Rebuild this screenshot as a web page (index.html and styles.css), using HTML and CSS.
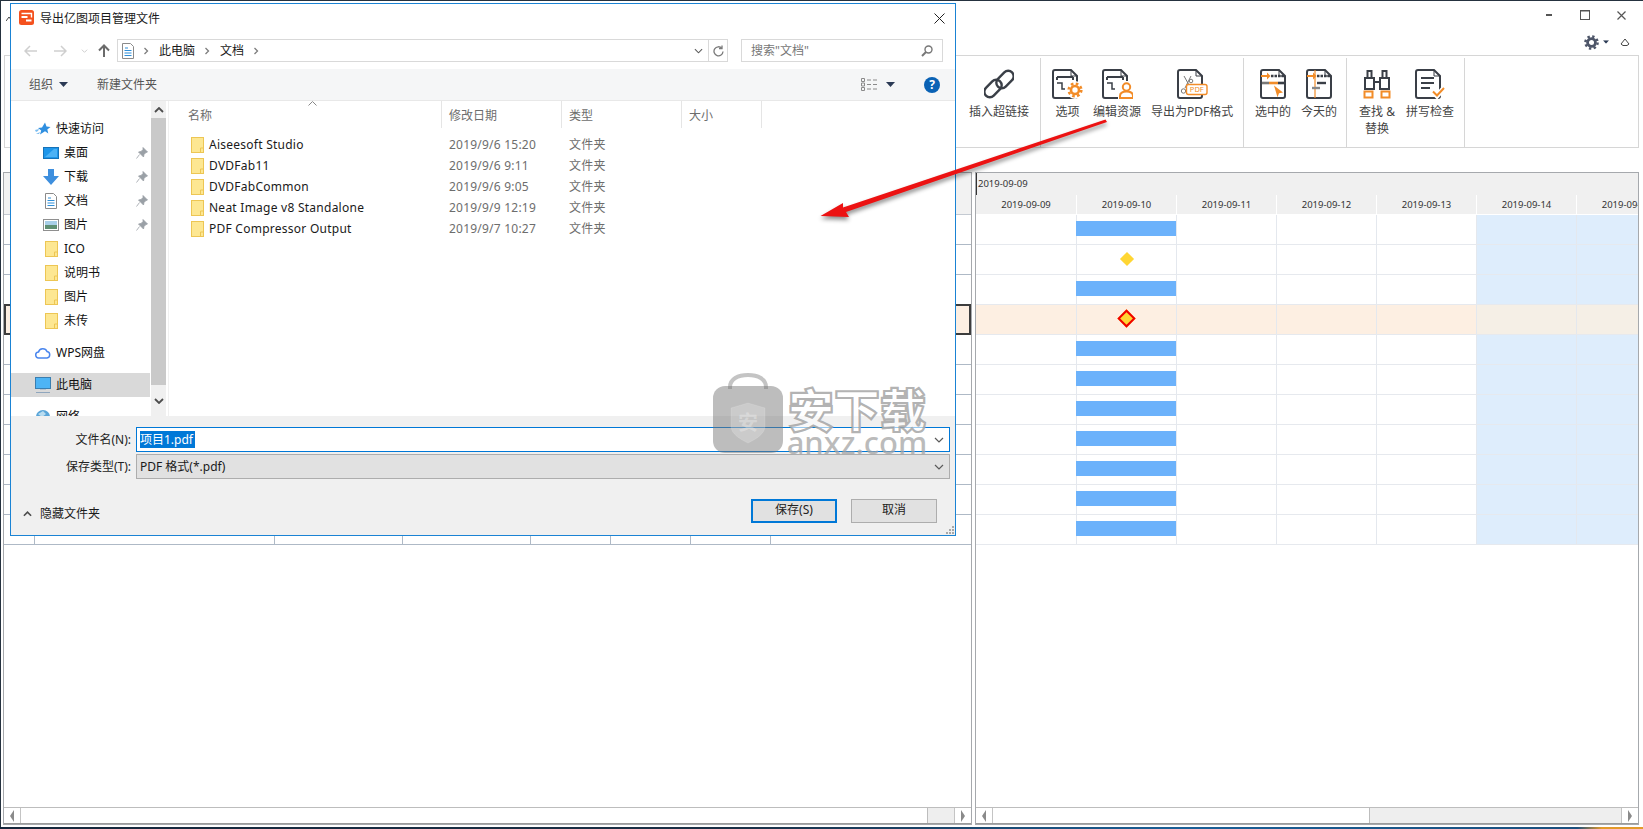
FILE: index.html
```html
<!DOCTYPE html>
<html lang="zh-CN">
<head>
<meta charset="utf-8">
<title>导出亿图项目管理文件</title>
<link rel="stylesheet" href="styles.css">
</head>
<body>
<svg class="sprite" aria-hidden="true">
  <symbol id="folder" viewBox="0 0 13 16"><rect x=".5" y=".5" width="12" height="15" fill="#fde792" stroke="#edc654"/><path d="M9.500 15v-4h3" fill="none" stroke="#edc654"/></symbol>
  <symbol id="pin" viewBox="0 0 12 12"><path d="M7 .5l4.500 4.500-1.500.5-2 2-.5 2.500-5-5 2.500-.5 2-2z M3.500 7.500L.5 11.500" fill="#9aa0a6" stroke="#9aa0a6" stroke-width=".8"/></symbol>
  <symbol id="chev" viewBox="0 0 8 8"><path d="M2.500 1l3 3-3 3" fill="none" stroke="#7d7d7d" stroke-width="1.300"/></symbol>
  <symbol id="down" viewBox="0 0 10 6"><path d="M1 1l4 4 4-4" fill="none" stroke="#5a5a5a" stroke-width="1.200"/></symbol>
  <symbol id="tri" viewBox="0 0 9 5"><path d="M0 0h9L4.500 5z" fill="#2b3a55"/></symbol>
  <symbol id="rdoc" viewBox="0 0 26 30"><path d="M3 1h16l6 6v20a2 2 0 0 1-2 2H3a2 2 0 0 1-2-2V3a2 2 0 0 1 2-2z" fill="#fff" stroke="#3a3f47" stroke-width="2"/><path d="M19 1v6h6" fill="none" stroke="#3a3f47"/></symbol>
  <symbol id="smalldoc" viewBox="0 0 12 16"><path d="M.5.5h8l3 3v12h-11z" fill="#fff" stroke="#8a8a8a"/><path d="M3 5h3M2.500 7.500h7M2.500 10h7M2.500 12.500h7" stroke="#2f8fd8"/></symbol>
</svg>

<div class="app">
  <div class="frame">
    <header class="winbar">
      <div class="winrow">
        <svg class="appmark" width="6" height="5" viewBox="0 0 6 5"><path d="M0 5l3-4 3 4" fill="none" stroke="#444"/></svg>
        <div class="ctrls">
          <span class="ctrl"><svg width="6" height="2" viewBox="0 0 6 2"><rect width="6" height="2" fill="#555"/></svg></span>
          <span class="ctrl"><svg width="10" height="10" viewBox="0 0 10 10"><rect x=".5" y=".5" width="9" height="9" fill="none" stroke="#555"/><path d="M0 1h10" stroke="#555"/></svg></span>
          <span class="ctrl"><svg width="9" height="9" viewBox="0 0 9 9"><path d="M.5.5l8 8M8.500.5l-8 8" stroke="#555" stroke-width="1.200"/></svg></span>
        </div>
      </div>
      <div class="toolrow">
        <svg width="15" height="15" viewBox="0 0 16 16"><circle cx="8" cy="8" r="4.200" fill="none" stroke="#4d5568" stroke-width="3"/><circle cx="8" cy="8" r="6.500" fill="none" stroke="#4d5568" stroke-width="2.600" stroke-dasharray="2.500 2.600"/></svg>
        <svg class="gear-tri" width="6" height="4" viewBox="0 0 9 5"><use href="#tri"/></svg>
        <svg class="collapse" width="10" height="8" viewBox="0 0 10 8"><path d="M1 6l4-5 4 5-2 1.500H3z" fill="none" stroke="#444"/></svg>
      </div>
    </header>

    <section class="ribbon">
      <div class="group g-first">
        <div class="item">
          <svg width="30" height="30" viewBox="0 0 30 30" fill="none" stroke="#3a3f47" stroke-width="2.400"><rect x="-1" y="14" width="20" height="11" rx="5.500" transform="rotate(-45 9 19.500)"/><rect x="11" y="5" width="20" height="11" rx="5.500" transform="rotate(-45 21 10.500)"/></svg>
          <span class="lbl">插入超链接</span>
        </div>
      </div>
      <div class="group g-2">
        <div class="item">
          <svg width="31" height="30" viewBox="0 0 31 30"><use href="#rdoc" width="26" height="30"/><path d="M5 8h16M5 8v3M21 8v3" fill="none" stroke="#3a3f47" stroke-width="2"/><path d="M5 14h5v6h3" fill="none" stroke="#3a3f47" stroke-width="1.500"/><circle cx="23" cy="21" r="9" fill="#fff"/><circle cx="23" cy="21" r="4" fill="none" stroke="#f28c28" stroke-width="2.600"/><circle cx="23" cy="21" r="6.300" fill="none" stroke="#f28c28" stroke-width="2.600" stroke-dasharray="2.600 2.350"/></svg>
          <span class="lbl">选项</span>
        </div>
        <div class="item">
          <svg width="31" height="30" viewBox="0 0 31 30"><use href="#rdoc" width="26" height="30"/><path d="M5 8h16M5 8v3M21 8v3" fill="none" stroke="#3a3f47" stroke-width="2"/><path d="M5 14h5v6h3" fill="none" stroke="#3a3f47" stroke-width="1.500"/><rect x="16" y="12" width="15" height="18" fill="#fff"/><circle cx="24.500" cy="18" r="3.700" fill="none" stroke="#f28c28" stroke-width="2"/><path d="M18 29v-2c0-3 3-4.500 6.500-4.500S31 24 31 27v2z" fill="none" stroke="#f28c28" stroke-width="2"/></svg>
          <span class="lbl">编辑资源</span>
        </div>
        <div class="item item-pdf">
          <svg width="31" height="30" viewBox="0 0 31 30"><use href="#rdoc" width="26" height="30"/><path d="M7 7l5 9M14 7l-6 12" fill="none" stroke="#777" stroke-width="1"/><circle cx="6.500" cy="22" r="2.200" fill="none" stroke="#777"/><circle cx="14" cy="12" r="1.800" fill="none" stroke="#777"/><rect x="9.500" y="15.500" width="20.500" height="10" rx="2" fill="#fff" stroke="#f28c28" stroke-width="1.400"/><text x="19.800" y="23.300" class="pdf-t">PDF</text></svg>
          <span class="lbl">导出为PDF格式</span>
        </div>
      </div>
      <div class="group g-3">
        <div class="item">
          <svg width="26" height="30" viewBox="0 0 26 30"><use href="#rdoc" width="26" height="30"/><path d="M1 7h7" stroke="#f28c28" stroke-width="2"/><path d="M7 3.500L10.500 7 7 10.500z" fill="#f28c28"/><path d="M11 7h13" stroke="#3a3f47" stroke-width="2.600" stroke-dasharray="2.500 1"/><path d="M2 14h7" stroke="#777" stroke-width="2.600"/><path d="M9 14h9" stroke="#f28c28" stroke-width="2.600"/><path d="M18 14h6" stroke="#3a3f47" stroke-width="2.600"/><path d="M14 16.500l9 7-4 .8-1.500 4z" fill="#f28c28"/></svg>
          <span class="lbl">选中的</span>
        </div>
        <div class="item">
          <svg width="26" height="30" viewBox="0 0 26 30"><use href="#rdoc" width="26" height="30"/><path d="M9 1v28" stroke="#f28c28" stroke-width="1.200"/><path d="M1 7h7" stroke="#f28c28" stroke-width="2"/><path d="M7 3.500L10.500 7 7 10.500z" fill="#f28c28"/><path d="M11 7h13" stroke="#3a3f47" stroke-width="2.400" stroke-dasharray="2.500 1"/><path d="M11 14h9" stroke="#3a3f47" stroke-width="2.400"/><path d="M6 19h8" stroke="#888" stroke-width="2.400"/></svg>
          <span class="lbl">今天的</span>
        </div>
      </div>
      <div class="group g-4">
        <div class="item item-find">
          <svg width="28" height="30" viewBox="0 0 28 30" fill="none"><path d="M2 9h9v11H2zM17 9h9v11h-9zM4.500 9V2h4v7M19.500 9V2h4v7M11 13h6" stroke="#3a3f47" stroke-width="2"/><path d="M1.500 22.500h8v6h-8zM18.500 22.500h8v6h-8z" stroke="#f28c28" stroke-width="2"/></svg>
          <span class="lbl">查找 &amp;<br>替换</span>
        </div>
        <div class="item">
          <svg width="30" height="30" viewBox="0 0 30 30"><use href="#rdoc" width="26" height="30"/><path d="M6 9h13M6 14h13M6 19h9" stroke="#3a3f47" stroke-width="1.800"/><path d="M17 22l5 5 7-8" fill="none" stroke="#fff" stroke-width="5"/><path d="M18 22.500l4 4 7-7.500" fill="none" stroke="#f28c28" stroke-width="2"/></svg>
          <span class="lbl">拼写检查</span>
        </div>
      </div>
      <div class="group g-last"></div>
    </section>

    <main class="panes">
      <section class="pane pane-l">
        <div class="pane-body">
          <div class="tbl-head"></div>
          <div class="lrow"><i></i><i></i><i></i><i></i><i></i><i></i><i></i><i></i></div>
          <div class="lrow"><i></i><i></i><i></i><i></i><i></i><i></i><i></i><i></i></div>
          <div class="lrow"><i></i><i></i><i></i><i></i><i></i><i></i><i></i><i></i></div>
          <div class="lrow lrow-sel"></div>
          <div class="lrow"><i></i><i></i><i></i><i></i><i></i><i></i><i></i><i></i></div>
          <div class="lrow"><i></i><i></i><i></i><i></i><i></i><i></i><i></i><i></i></div>
          <div class="lrow"><i></i><i></i><i></i><i></i><i></i><i></i><i></i><i></i></div>
          <div class="lrow"><i></i><i></i><i></i><i></i><i></i><i></i><i></i><i></i></div>
          <div class="lrow"><i></i><i></i><i></i><i></i><i></i><i></i><i></i><i></i></div>
          <div class="lrow"><i></i><i></i><i></i><i></i><i></i><i></i><i></i><i></i></div>
          <div class="lrow"><i></i><i></i><i></i><i></i><i></i><i></i><i></i><i></i></div>
        </div>
        <div class="sb">
          <span class="sb-btn"><b class="arr-l"></b></span>
          <span class="thumb thumb-l"></span>
          <span class="track"></span>
          <span class="sb-btn sb-end"><b class="arr-r"></b></span>
        </div>
      </section>

      <section class="pane pane-r">
        <div class="pane-body">
          <div class="g-head1"><span>2019-09-09</span></div>
          <div class="g-head2">
            <span>2019-09-09</span><span>2019-09-10</span><span>2019-09-11</span><span>2019-09-12</span><span>2019-09-13</span><span>2019-09-14</span><span>2019-09-15</span>
          </div>
          <div class="grow"><i></i><i><u class="bar"></u></i><i></i><i></i><i></i><i class="we"></i><i class="we"></i></div>
          <div class="grow"><i></i><i class="mid"><u class="dia"></u></i><i></i><i></i><i></i><i class="we"></i><i class="we"></i></div>
          <div class="grow"><i></i><i><u class="bar"></u></i><i></i><i></i><i></i><i class="we"></i><i class="we"></i></div>
          <div class="grow grow-hl"><i></i><i class="mid"><u class="dia dia-sel"></u></i><i></i><i></i><i></i><i class="we"></i><i class="we"></i></div>
          <div class="grow"><i></i><i><u class="bar"></u></i><i></i><i></i><i></i><i class="we"></i><i class="we"></i></div>
          <div class="grow"><i></i><i><u class="bar"></u></i><i></i><i></i><i></i><i class="we"></i><i class="we"></i></div>
          <div class="grow"><i></i><i><u class="bar"></u></i><i></i><i></i><i></i><i class="we"></i><i class="we"></i></div>
          <div class="grow"><i></i><i><u class="bar"></u></i><i></i><i></i><i></i><i class="we"></i><i class="we"></i></div>
          <div class="grow"><i></i><i><u class="bar"></u></i><i></i><i></i><i></i><i class="we"></i><i class="we"></i></div>
          <div class="grow"><i></i><i><u class="bar"></u></i><i></i><i></i><i></i><i class="we"></i><i class="we"></i></div>
          <div class="grow"><i></i><i><u class="bar"></u></i><i></i><i></i><i></i><i class="we"></i><i class="we"></i></div>
        </div>
        <div class="sb">
          <span class="sb-btn"><b class="arr-l"></b></span>
          <span class="thumb thumb-r"></span>
          <span class="track"></span>
          <span class="sb-btn sb-end"><b class="arr-r"></b></span>
        </div>
      </section>
    </main>
  </div>
  <div class="taskbar"></div>
</div>

<div class="dialog">
  <div class="d-title">
    <svg width="15" height="15" viewBox="0 0 15 15"><rect width="15" height="15" rx="2.500" fill="#f4511e"/><path d="M2.500 3.500h10v4" fill="none" stroke="#fff" stroke-width="1.400"/><rect x="2.500" y="6" width="6" height="2" fill="#fff"/><rect x="7" y="9.500" width="5.500" height="2" fill="#fff"/></svg>
    <span class="d-title-t">导出亿图项目管理文件</span>
    <svg class="d-close" width="11" height="11" viewBox="0 0 11 11"><path d="M.5.500l10 10M10.500.5l-10 10" stroke="#222" stroke-width="1"/></svg>
  </div>

  <div class="d-nav">
    <span class="nb nb-back"><svg width="13" height="12" viewBox="0 0 13 12" fill="none" stroke="#cfcfcf" stroke-width="1.500"><path d="M6 1L1 6l5 5M1 6h12"/></svg></span>
    <span class="nb nb-fwd"><svg width="13" height="12" viewBox="0 0 13 12" fill="none" stroke="#cfcfcf" stroke-width="1.500"><path d="M7 1l5 5-5 5M12 6H0"/></svg></span>
    <span class="nb nb-dd"><svg width="7" height="4" viewBox="0 0 10 6"><path d="M1 1l4 4 4-4" fill="none" stroke="#cfcfcf" stroke-width="1.500"/></svg></span>
    <span class="nb nb-up"><svg width="12" height="13" viewBox="0 0 12 13" fill="none" stroke="#6b6b6b" stroke-width="2"><path d="M1 6.500l5-5 5 5M6 2v11"/></svg></span>
    <div class="addr">
      <svg width="12" height="16" viewBox="0 0 12 16"><use href="#smalldoc"/></svg>
      <svg class="cr-chev" width="8" height="8" viewBox="0 0 8 8"><use href="#chev"/></svg>
      <span class="crumb">此电脑</span>
      <svg class="cr-chev" width="8" height="8" viewBox="0 0 8 8"><use href="#chev"/></svg>
      <span class="crumb">文档</span>
      <svg class="cr-chev" width="8" height="8" viewBox="0 0 8 8"><use href="#chev"/></svg>
      <span class="addr-fill"></span>
      <svg class="addr-dd" width="9" height="6" viewBox="0 0 10 6"><use href="#down"/></svg>
      <span class="addr-ref"><svg width="11" height="12" viewBox="0 0 11 12" fill="none" stroke="#7a7a7a" stroke-width="1.300"><path d="M8.800 3.200A4.500 4.500 0 1 0 10 6.500"/><path d="M9 .5v3H6" /></svg></span>
    </div>
    <div class="search">
      <span>搜索"文档"</span>
      <svg width="12" height="12" viewBox="0 0 12 12" fill="none" stroke="#777" stroke-width="1.400"><circle cx="7.500" cy="4.500" r="3.500"/><path d="M5 7l-4 4" stroke-width="2"/></svg>
    </div>
  </div>

  <div class="d-tools">
    <span class="tl">组织</span>
    <svg class="tl-tri" width="9" height="5" viewBox="0 0 9 5"><use href="#tri"/></svg>
    <span class="tl tl-new">新建文件夹</span>
    <span class="tl-fill"></span>
    <svg width="16" height="13" viewBox="0 0 16 13" fill="none" stroke="#8a8a8a"><path d="M.5.500h3v3h-3zM.5 5h3v3h-3zM.5 9.500h3v3h-3zM6 2h4M6 6.500h4M6 11h4M12 2h4M12 6.500h4M12 11h4"/></svg>
    <svg class="tl-tri2" width="9" height="5" viewBox="0 0 9 5"><use href="#tri"/></svg>
    <span class="help">?</span>
  </div>

  <div class="d-body">
    <nav class="tree">
      <div class="ti ti-top"><svg width="16" height="14" viewBox="0 0 16 14"><path d="M10 .5l1.500 4 4 .4-3.200 2.600 1 4-3.300-2.200L5 12.500l1.200-4L3 6l4-.6z" fill="#2f8fe0"/><path d="M0 8l4-1-1 2-2 1zM1 12l4-2-1 2z" fill="#7bbdf0"/></svg><span>快速访问</span></div>
      <div class="ti ti-sub"><svg width="16" height="12" viewBox="0 0 16 12"><rect x=".5" y=".5" width="15" height="11" fill="#1e96ea" stroke="#1672b8"/><path d="M2 10l9-8h3v8z" fill="#4db2f5"/></svg><span>桌面</span><svg class="pin" width="12" height="12" viewBox="0 0 12 12"><use href="#pin"/></svg></div>
      <div class="ti ti-sub"><svg width="16" height="16" viewBox="0 0 16 16"><path d="M5 0h6v7h5l-8 9-8-9h5z" fill="#3e8fde"/></svg><span>下载</span><svg class="pin" width="12" height="12" viewBox="0 0 12 12"><use href="#pin"/></svg></div>
      <div class="ti ti-sub"><span class="ic16"><svg width="12" height="16" viewBox="0 0 12 16"><use href="#smalldoc"/></svg></span><span>文档</span><svg class="pin" width="12" height="12" viewBox="0 0 12 12"><use href="#pin"/></svg></div>
      <div class="ti ti-sub"><svg width="16" height="12" viewBox="0 0 16 12"><rect x=".5" y=".5" width="15" height="11" fill="#fff" stroke="#8f8f8f"/><rect x="2" y="2" width="12" height="4" fill="#a8cfe8"/><path d="M2 6h12v4H2z" fill="#5f8f73"/></svg><span>图片</span><svg class="pin" width="12" height="12" viewBox="0 0 12 12"><use href="#pin"/></svg></div>
      <div class="ti ti-sub"><span class="ic16"><svg width="13" height="16" viewBox="0 0 13 16"><use href="#folder"/></svg></span><span>ICO</span></div>
      <div class="ti ti-sub"><span class="ic16"><svg width="13" height="16" viewBox="0 0 13 16"><use href="#folder"/></svg></span><span>说明书</span></div>
      <div class="ti ti-sub"><span class="ic16"><svg width="13" height="16" viewBox="0 0 13 16"><use href="#folder"/></svg></span><span>图片</span></div>
      <div class="ti ti-sub"><span class="ic16"><svg width="13" height="16" viewBox="0 0 13 16"><use href="#folder"/></svg></span><span>未传</span></div>
      <div class="ti ti-top ti-gap"><svg width="16" height="12" viewBox="0 0 16 12"><path d="M4 11a3 3 0 0 1-.5-6A4.500 4.500 0 0 1 12 4.500 3.300 3.300 0 0 1 12 11z" fill="#fff" stroke="#4a86ee" stroke-width="1.500"/></svg><span>WPS网盘</span></div>
      <div class="ti ti-top ti-gap ti-sel"><svg width="16" height="16" viewBox="0 0 16 16"><rect x=".5" y=".5" width="15" height="11" fill="#4db4f5" stroke="#3a7eb0"/><path d="M1 15.500h14" stroke="#8fa6bd"/><path d="M5 12.500h6" stroke="#b4c2d0"/></svg><span>此电脑</span></div>
      <div class="ti ti-top ti-gap"><svg width="16" height="16" viewBox="0 0 16 16"><circle cx="8" cy="8" r="7" fill="#5aa5d8"/><path d="M3 5l5-3 3 3-4 3zM9 9l4-1-1 5-3-1z" fill="#b8dcf0"/></svg><span>网络</span></div>
    </nav>
    <div class="vsb">
      <span class="vsb-b"><svg width="10" height="6" viewBox="0 0 10 6"><path d="M1 5l4-4 4 4" fill="none" stroke="#4d4d4d" stroke-width="1.800"/></svg></span>
      <span class="vsb-t"></span>
      <span class="vsb-e"><svg width="10" height="6" viewBox="0 0 10 6"><path d="M1 1l4 4 4-4" fill="none" stroke="#4d4d4d" stroke-width="1.800"/></svg></span>
    </div>
    <div class="vdiv"></div>
    <div class="list">
      <div class="l-head">
        <span class="lh lh-name">名称<svg class="sort" width="9" height="5" viewBox="0 0 9 5"><path d="M.5 4.500l4-4 4 4" fill="none" stroke="#888"/></svg></span>
        <span class="lh">修改日期</span>
        <span class="lh">类型</span>
        <span class="lh">大小</span>
      </div>
      <div class="f"><span class="fn"><svg width="13" height="16" viewBox="0 0 13 16"><use href="#folder"/></svg>Aiseesoft Studio</span><span class="fm">2019/9/6 15:20</span><span class="fm">文件夹</span></div>
      <div class="f"><span class="fn"><svg width="13" height="16" viewBox="0 0 13 16"><use href="#folder"/></svg>DVDFab11</span><span class="fm">2019/9/6 9:11</span><span class="fm">文件夹</span></div>
      <div class="f"><span class="fn"><svg width="13" height="16" viewBox="0 0 13 16"><use href="#folder"/></svg>DVDFabCommon</span><span class="fm">2019/9/6 9:05</span><span class="fm">文件夹</span></div>
      <div class="f"><span class="fn"><svg width="13" height="16" viewBox="0 0 13 16"><use href="#folder"/></svg>Neat Image v8 Standalone</span><span class="fm">2019/9/9 12:19</span><span class="fm">文件夹</span></div>
      <div class="f"><span class="fn"><svg width="13" height="16" viewBox="0 0 13 16"><use href="#folder"/></svg>PDF Compressor Output</span><span class="fm">2019/9/7 10:27</span><span class="fm">文件夹</span></div>
    </div>
  </div>

  <div class="d-foot">
    <div class="frow">
      <label class="flabel">文件名(N):</label>
      <div class="fbox fbox-on"><span class="seltext">项目1.pdf</span><svg width="10" height="6" viewBox="0 0 10 6"><use href="#down"/></svg></div>
    </div>
    <div class="frow">
      <label class="flabel">保存类型(T):</label>
      <div class="fbox fbox-off"><span class="typetext">PDF 格式(*.pdf)</span><svg width="10" height="6" viewBox="0 0 10 6"><use href="#down"/></svg></div>
    </div>
    <div class="fact">
      <div class="hide"><svg width="9" height="6" viewBox="0 0 10 6"><path d="M1 5l4-4 4 4" fill="none" stroke="#4d4d4d" stroke-width="1.800"/></svg><span>隐藏文件夹</span></div>
      <div class="btns"><button class="btn btn-main">保存(S)</button><button class="btn">取消</button></div>
    </div>
    <svg class="grip" width="10" height="10" viewBox="0 0 10 10" fill="#a8a8a8"><rect x="7" y="1" width="2" height="2"/><rect x="4" y="4" width="2" height="2"/><rect x="7" y="4" width="2" height="2"/><rect x="1" y="7" width="2" height="2"/><rect x="4" y="7" width="2" height="2"/><rect x="7" y="7" width="2" height="2"/></svg>
  </div>
</div>

<div class="wm">
  <svg width="70" height="80" viewBox="0 0 70 80"><path d="M17 16V14C17 6 25 2 35 2s18 4 18 12v2" fill="none" stroke="#8a8a8a" stroke-opacity=".5" stroke-width="4"/><rect y="13" width="70" height="67" rx="12" fill="#767676" fill-opacity=".48"/><path d="M35 30l17 5v18c0 8-9 13-17 17-8-4-17-9-17-17V35z" fill="#fff" fill-opacity=".22" stroke="#fff" stroke-opacity=".12"/><text x="35" y="57" class="wm-shield">安</text></svg>
  <div class="wm-text">
    <span class="wm-cn">安下载</span>
    <span class="wm-en">anxz.com</span>
  </div>
</div>

<svg class="arrow" width="1643" height="829" viewBox="0 0 1643 829"><polygon points="820.500,216 843,203 843,207.500 1105.500,119.500 1107,122 846,212 849,217" fill="#ec1212"/></svg>
</body>
</html>
```
FILE: styles.css
```css
* { box-sizing: border-box; }
html, body { margin: 0; padding: 0; }
body {
  width: 1643px; height: 829px; overflow: hidden; position: relative;
  background: #fff; color: #222;
  font: 12px/16px "Noto Sans", "Noto Sans CJK SC", sans-serif;
}
.sprite { position: absolute; width: 0; height: 0; overflow: hidden; }
svg { display: block; flex: none; }
i, u, b { display: block; text-decoration: none; font-style: normal; }

.app { width: 1643px; height: 829px; display: flex; flex-direction: column; }
.frame {
  height: 827px; display: flex; flex-direction: column;
  border-top: 1px solid #25323f; border-left: 1px solid #25323f;
}
.taskbar {
  height: 2px;
  background: linear-gradient(90deg, #16273b 0, #1a2f45 45%, #1a5f96 72%, #1b4f7d 96%, #e39a2b 97.5%, #e39a2b 100%);
}

/* window bar */
.winbar { height: 54px; display: flex; flex-direction: column; }
.winrow { height: 28px; display: flex; align-items: center; padding-left: 5px; }
.appmark { margin-top: 6px; }
.ctrls { margin-left: auto; margin-right: 4px; display: flex; }
.ctrl { width: 36px; height: 28px; display: flex; align-items: center; justify-content: center; }
.toolrow { height: 26px; display: flex; align-items: center; justify-content: flex-end; padding-right: 13px; }
.gear-tri { margin-left: 4px; }
.collapse { margin-left: 11px; }

/* ribbon */
.ribbon {
  height: 93px; margin-left: 3px; margin-right: 4px;
  border: 1px solid #d6d6d6; display: flex;
}
.group { display: flex; gap: 10px; padding: 13px 10px 0; border-right: 1px solid #d6d6d6; margin: 2px 0 0; }
.group .item { margin-top: -2px; }
.g-first { width: 1036px; justify-content: flex-end; padding-right: 11px; }
.g-2 { width: 203px; padding-left: 11px; padding-right: 0; }
.g-3 { width: 103px; padding-left: 11px; padding-right: 0; }
.g-4 { width: 118px; padding-left: 11px; padding-right: 0; }
.g-last { flex: 1; border-right: 0; }
.item { display: flex; flex-direction: column; align-items: center; }
.lbl { margin-top: 4px; line-height: 17px; color: #444; text-align: center; white-space: nowrap; }
.item-pdf { width: 82px; }
.item-find { width: 38px; }
.pdf-t { font: 7.5px "Noto Sans", sans-serif; fill: #f28c28; text-anchor: middle; }

/* panes */
.panes { margin-top: 24px; margin-left: 2px; height: 653px; display: flex; gap: 3px; }
.pane {
  display: flex; flex-direction: column; height: 653px;
  border: 1px solid #a6a9ad;
}
.pane-l { width: 969px; border-left-width: 1px; }
.pane-r { width: 664px; }
.pane-body { flex: 1; min-height: 0; overflow: hidden; }

.tbl-head { height: 42px; background: #f2f2f2; border-bottom: 1px solid #c4cad2; }
.lrow {
  height: 30px; display: grid; grid-template-columns: 31px 240px 128px 128px 80px 80px 80px 1fr;
  border-bottom: 1px solid #aeb9c6;
}
.lrow i { border-right: 1px solid #aeb9c6; }
.lrow i:last-child { border-right: 0; }
.lrow-sel {
  height: 31px; margin-top: -1px; background: #fdefe2; border: 0;
  box-shadow: inset 0 0 0 2px #3d3d3d;
}

/* gantt */
.g-head1 {
  height: 22px; background: #f0f0f0; border-left: 1px solid #333;
  display: flex; align-items: center; padding-left: 1px;
  font-size: 9.5px; color: #333;
}
.g-head2 { height: 20px; display: flex; width: 701px; background: #f0f0f0; border-bottom: 1px solid #fff; }
.g-head2 span {
  width: 100px; display: flex; align-items: center; justify-content: center;
  border-right: 1px solid #fff; font-size: 9.5px; color: #333;
}
.g-head2 span:first-child { width: 101px; }
.grow { height: 30px; width: 701px; display: flex; border-bottom: 1px solid #e6e9ee; }
.grow i { width: 100px; border-right: 1px solid #e4e8ee; }
.grow i:first-child { width: 101px; }
.grow .we { background: #deedfc; }
.grow-hl { background: #fdefe2; }
.grow-hl .we { background: #f5efe6; }
.bar { height: 15px; width: 100px; margin: 6px 0 0 -1px; background: #6cb2fb; }
.mid { display: flex; align-items: center; justify-content: center; padding-bottom: 2px; }
.dia { width: 10px; height: 10px; background: #ffd633; transform: rotate(45deg); }
.dia-sel { width: 13px; height: 13px; border: 2px solid #f00000; }

/* scrollbars */
.sb { height: 17px; flex: none; display: flex; border-top: 1px solid #bdbdbd; border-bottom: 1px solid #9b9b9b; }
.sb-btn { width: 17px; display: flex; align-items: center; justify-content: center; border-right: 1px solid #c4c4c4; }
.sb-end { border-right: 0; border-left: 1px solid #c4c4c4; }
.arr-l, .arr-r { width: 0; height: 0; border-top: 6px solid transparent; border-bottom: 6px solid transparent; }
.arr-l { border-right: 4px solid #8a8a8a; }
.arr-r { border-left: 4px solid #8a8a8a; }
.thumb { border-right: 1px solid #bdbdbd; }
.thumb-l { width: 907px; }
.thumb-r { width: 377px; }
.track { flex: 1; background: #eee; }

/* dialog */
.dialog {
  position: absolute; left: 10px; top: 3px; width: 946px; height: 533px;
  background: #fff; border: 1px solid #1a83d4;
  display: flex; flex-direction: column; color: #1a1a1a;
}
.d-title { height: 33px; flex: none; display: flex; padding: 6px 0 0 8px; }
.d-title-t { margin-left: 6px; margin-top: 1px; }
.d-close { margin: 3px 10px 0 auto; }
.d-nav { height: 32px; flex: none; display: flex; padding: 2px 0 0 4px; }
.nb { height: 23px; display: flex; align-items: center; justify-content: center; }
.nb-back, .nb-fwd { width: 30px; }
.nb-dd { width: 18px; }
.nb-up { width: 22px; margin-right: 2px; }
.addr {
  width: 611px; height: 23px; border: 1px solid #d9d9d9;
  display: flex; align-items: center; padding-left: 4px;
}
.cr-chev { margin-left: 8px; }
.crumb { margin-left: 9px; }
.addr-fill { flex: 1; }
.addr-dd { margin-right: 1px; }
.addr-ref { width: 19px; height: 21px; border-left: 1px solid #d9d9d9; margin-left: 4px; display: flex; align-items: center; justify-content: center; }
.search {
  width: 202px; height: 23px; margin-left: 13px; border: 1px solid #d9d9d9;
  display: flex; align-items: center; justify-content: space-between;
  padding: 0 9px 0 9px; color: #777;
}
.d-tools {
  height: 32px; flex: none; background: #f5f6f7; border-bottom: 1px solid #e8e8e8;
  display: flex; align-items: center; padding: 0 15px 0 18px; color: #555;
}
.tl-tri { margin-left: 6px; }
.tl-new { margin-left: 29px; }
.tl-fill { flex: 1; }
.tl-tri2 { margin-left: 9px; }
.help {
  width: 16px; height: 16px; margin-left: 29px; border-radius: 50%;
  background: #0a62b5; color: #fff; font-weight: 700; font-size: 12px; line-height: 16px; text-align: center;
}
.d-body { height: 315px; flex: none; display: flex; overflow: hidden; }
.tree { width: 140px; height: 315px; padding-top: 16px; overflow: hidden; color: #111; }
.ti { height: 24px; display: flex; align-items: center; gap: 5px; }
.ti-top { padding-left: 24px; }
.ti-sub { padding-left: 32px; }
.ti-gap { margin-top: 8px; }
.ti-sel { background: #d9d9d9; margin-right: 1px; }
.ic16 { width: 16px; display: flex; justify-content: center; }
.pin { margin-left: auto; margin-right: 3px; }
.vsb { width: 15px; display: flex; flex-direction: column; background: #f0f0f0; }
.vsb-b { height: 17px; display: flex; align-items: center; justify-content: center; }
.vsb-t { height: 267px; background: #c9c9c9; }
.vsb-e { flex: 1; display: flex; align-items: center; justify-content: center; }
.vdiv { width: 3px; border-right: 1px solid #f0f0f0; }
.list { flex: 1; }
.l-head { height: 27px; display: grid; grid-template-columns: 273px 120px 120px 80px; margin-bottom: 6px; color: #6d6d6d; }
.lh { border-right: 1px solid #e5e5e5; padding: 7px 0 0 7px; position: relative; }
.lh-name { padding-left: 19px; }
.sort { position: absolute; left: 139px; top: 0; }
.f { height: 21px; display: grid; grid-template-columns: 273px 120px 120px; align-items: center; }
.fn { display: flex; align-items: center; gap: 5px; padding-left: 22px; letter-spacing: .25px; }
.fm { padding-left: 7px; color: #6d6d6d; letter-spacing: .22px; }

.d-foot { flex: 1; background: #f0f0f0; padding: 11px 5px 0 0; position: relative; display: flex; flex-direction: column; gap: 2px; }
.frow { display: flex; height: 25px; align-items: center; }
.flabel { width: 120px; text-align: right; margin-right: 5px; color: #222; }
.fbox {
  flex: 1; height: 25px; display: flex; align-items: center; justify-content: space-between;
  padding: 0 5px 0 3px;
}
.fbox-on { background: #fff; border: 1px solid #0078d7; }
.fbox-off { background: #e1e1e1; border: 1px solid #adadad; }
.seltext { background: #0078d7; color: #fff; height: 17px; line-height: 17px; width: 55px; white-space: nowrap; overflow: hidden; }
.fact { display: flex; justify-content: space-between; align-items: flex-start; padding: 18px 13px 0 0; }
.hide { display: flex; align-items: center; gap: 8px; padding: 7px 0 0 12px; }
.btns { display: flex; gap: 14px; }
.btn {
  width: 86px; height: 24px; padding: 0 0 2px; background: #e1e1e1; border: 1px solid #adadad;
  border-radius: 0; font: inherit; color: #222;
}
.btn-main { border: 2px solid #0078d7; }
.grip { position: absolute; right: 0; bottom: 0; }

/* watermark */
.wm { position: absolute; left: 713px; top: 373px; display: flex; gap: 5px; pointer-events: none; }
.wm-shield { font: 700 20px "Noto Sans CJK SC", sans-serif; fill: #fff; fill-opacity: .3; text-anchor: middle; }
.wm-text { display: flex; flex-direction: column; align-items: center; width: 138px; }
.wm-cn {
  margin-top: 11px; height: 46px; font: 900 46px/46px "Noto Sans CJK SC", sans-serif;
  color: rgba(255,255,255,.6); -webkit-text-stroke: 2.2px rgba(165,165,165,.85); white-space: nowrap;
}
.wm-en { height: 24px; font: 500 31px/24px "Noto Sans", sans-serif; color: rgba(165,165,165,.75); white-space: nowrap; }

.arrow { position: absolute; left: 0; top: 0; pointer-events: none; filter: drop-shadow(0 3px 2px rgba(0,0,0,.45)); }
```
